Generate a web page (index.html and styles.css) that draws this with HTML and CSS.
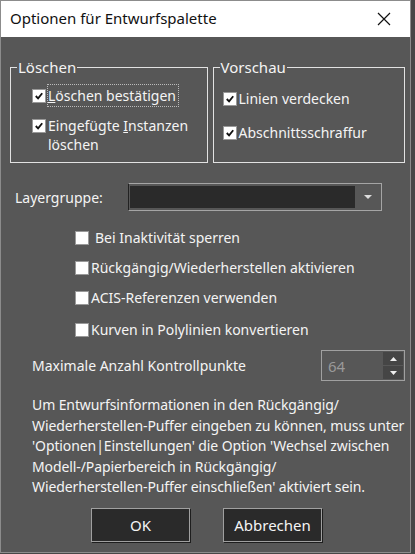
FILE: index.html
```html
<!DOCTYPE html>
<html lang="de">
<head>
    <meta charset="UTF-8">
    <meta name="viewport" content="width=device-width, initial-scale=1.0">
    <title>Optionen für Entwurfspalette</title>
    <link rel="stylesheet" href="styles.css">
</head>
<body>

<div class="window">
    <div class="titlebar">
        <span class="title">Optionen für Entwurfspalette</span>
        <svg class="close" width="14" height="14" viewBox="0 0 14 14">
            <path d="M1 1 L13 13 M13 1 L1 13" stroke="#111" stroke-width="1.2" fill="none"/>
        </svg>
    </div>

    <div class="content">
        <div class="groups">
            <fieldset class="group group-delete">
                <legend>Löschen</legend>
                <div class="check-row">
                    <span class="box checked"><svg viewBox="0 0 13 13"><path d="M3 6.5 L5.5 9 L10 3.5" stroke="#111" stroke-width="2" fill="none"/></svg></span>
                    <span class="focus"><u>L</u>öschen bestätigen</span>
                </div>
                <div class="check-row top">
                    <span class="box checked"><svg viewBox="0 0 13 13"><path d="M3 6.5 L5.5 9 L10 3.5" stroke="#111" stroke-width="2" fill="none"/></svg></span>
                    <span>Eingefügte <u>I</u>nstanzen<br>löschen</span>
                </div>
            </fieldset>
            <fieldset class="group group-preview">
                <legend>Vorschau</legend>
                <div class="check-row">
                    <span class="box checked"><svg viewBox="0 0 13 13"><path d="M3 6.5 L5.5 9 L10 3.5" stroke="#111" stroke-width="2" fill="none"/></svg></span>
                    <span>Linien verdecken</span>
                </div>
                <div class="check-row">
                    <span class="box checked"><svg viewBox="0 0 13 13"><path d="M3 6.5 L5.5 9 L10 3.5" stroke="#111" stroke-width="2" fill="none"/></svg></span>
                    <span>Abschnittsschraffur</span>
                </div>
            </fieldset>
        </div>

        <div class="layer-row">
            <span class="layer-label">Layergruppe:</span>
            <div class="combo">
                <div class="combo-field"></div>
                <div class="combo-arrow"><svg width="8" height="5" viewBox="0 0 8 5"><path d="M0 0 L8 0 L4 4 Z" fill="#ddd"/></svg></div>
            </div>
        </div>

        <div class="options">
            <div class="check-row"><span class="box"></span><span class="gap">Bei Inaktivität sperren</span></div>
            <div class="check-row"><span class="box"></span><span>Rückgängig/Wiederherstellen aktivieren</span></div>
            <div class="check-row"><span class="box"></span><span>ACIS-Referenzen verwenden</span></div>
            <div class="check-row last"><span class="box"></span><span>Kurven in Polylinien konvertieren</span></div>
        </div>

        <div class="spin-row">
            <span>Maximale Anzahl Kontrollpunkte</span>
            <div class="spin">
                <span class="spin-value">64</span>
                <div class="spin-buttons">
                    <div class="spin-btn"><svg width="7" height="4" viewBox="0 0 7 4"><path d="M0 4 L7 4 L3.5 0 Z" fill="#eee"/></svg></div>
                    <div class="spin-btn"><svg width="7" height="4" viewBox="0 0 7 4"><path d="M0 0 L7 0 L3.5 4 Z" fill="#eee"/></svg></div>
                </div>
            </div>
        </div>

        <p class="note">Um Entwurfsinformationen in den Rückgängig/<br>Wiederherstellen-Puffer eingeben zu können, muss unter<br>'Optionen|Einstellungen' die Option 'Wechsel zwischen<br>Modell-/Papierbereich in Rückgängig/<br>Wiederherstellen-Puffer einschließen' aktiviert sein.</p>

        <div class="buttons">
            <button class="btn">OK</button>
            <button class="btn">Abbrechen</button>
        </div>
    </div>
</div>

</body>
</html>
```

FILE: styles.css
```css
body { margin: 0; background: #474747; font-family: "Noto Sans", "Open Sans", sans-serif; font-size: 14px; color: #f4f4f4; }
.window { width: 409px; height: 551px; border: 1px solid #8c8c8c; background: #575757; display: flex; flex-direction: column; overflow: hidden; }
.titlebar { flex: none; height: 36px; background: #fff; display: flex; align-items: center; justify-content: space-between; padding: 0 19px 0 9px; color: #111; font-size: 15px; }
.title { margin-top: -2px; }
.content { flex: 1; padding: 21px 5px 0 9px; }
.groups { display: flex; gap: 5px; }
.group { margin: 0; border: 1px solid #e2e2e2; padding: 9px 0 0 0; min-width: 0; height: 105px; box-sizing: border-box; }
.group legend { padding: 0 1px; margin-left: 6px; font-size: 15px; line-height: 18px; }
.group .check-row { margin-left: 21px; }
.group-delete { width: 198px; }
.group-preview { width: 193px; padding-top: 13px; }
.group-preview .check-row { margin-left: 9px; margin-bottom: 15px; }
.check-row { display: flex; align-items: center; gap: 2px; line-height: 19px; margin-bottom: 10px; white-space: nowrap; }
.check-row.top { align-items: flex-start; }
.check-row.top .box { margin-top: 3px; }
.box { width: 14px; height: 14px; background: #fff; border: 1px solid #999; box-sizing: border-box; flex: none; display: flex; }
.box svg { width: 12px; height: 12px; }
.focus { outline: 1px dotted #bbb; padding: 1px 2px 1px 0; }
.gap { margin-left: 4px; }
.layer-row { display: flex; align-items: center; margin-top: 20px; padding-left: 5px; }
.layer-label { width: 113px; }
.combo { width: 250px; height: 24px; border: 1px solid #a5a5a5; border-left-color: #222; display: flex; align-items: center; padding: 1px; box-sizing: content-box; }
.combo-field { width: 225px; height: 22px; background: #2a2a2a; }
.combo-arrow { flex: 1; display: flex; justify-content: center; }
.options { padding-left: 65px; margin-top: 17px; }
.options .check-row { margin-bottom: 11px; }
.options .check-row.last { margin-top: 13px; }
.spin-row { display: flex; align-items: center; justify-content: space-between; padding-left: 22px; margin-top: 6px; }
.spin { width: 82px; height: 29px; border: 1px solid #a0a0a0; display: flex; justify-content: space-between; }
.spin-value { color: #9a9a9a; padding: 5px 0 0 6px; font-size: 15px; }
.spin-buttons { display: flex; flex-direction: column; gap: 1px; padding: 1px; }
.spin-btn { width: 20px; height: 13px; background: #454545; display: flex; align-items: center; justify-content: center; }
.note { margin: 14px 0 0 22px; line-height: 20.5px; font-size: 14px; white-space: nowrap; letter-spacing: -0.1px; }
.buttons { display: flex; gap: 33px; padding-left: 81px; margin-top: 10px; }
.btn { width: 99px; height: 34px; background: #2a2a2a; color: #f4f4f4; border: 1px solid #a0a0a0; box-shadow: 1px 1px 0 #1e1e1e; font-family: inherit; font-size: 15px; }
```
